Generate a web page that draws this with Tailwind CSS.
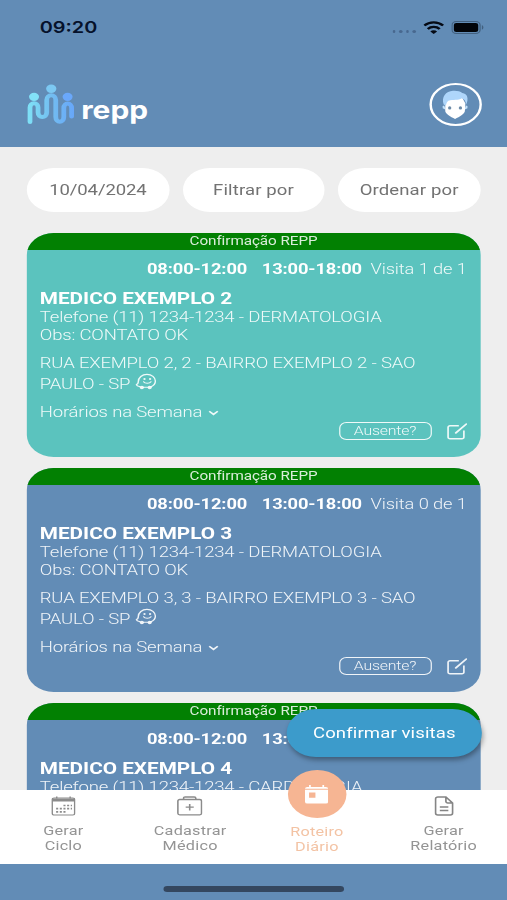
<!DOCTYPE html>
<html lang="pt-BR">
<head>
    <meta charset="UTF-8">
    <meta name="viewport" content="width=device-width, initial-scale=1.0">
    <title>Roteiro Diário</title>
    <!-- Tailwind CSS -->
    <script src="https://cdn.jsdelivr.net/npm/@tailwindcss/browser@4"></script>
    <style>
        body { font-family: Roboto, 'Liberation Sans', sans-serif; }
    </style>
</head>
<body class="w-[507px] h-[900px] overflow-hidden bg-[#eeeeee]">

    <!-- Ícones compartilhados pelos cartões -->
    <svg class="hidden">
        <symbol id="icon-waze" viewBox="0 0 16 16">
            <path d="M3.600 13C2 12.500.9 11.800.6 10.900c1.500-.2 1.600-1 1.600-2.600C2.200 4.200 5.200 1.300 8.900 1.300c3.700 0 6.500 2.800 6.500 6.300 0 2.300-1.300 4.300-3.300 5.400M6.300 13.400h3.300" fill="none" stroke="currentColor" stroke-width="1.100" stroke-linecap="round"/>
            <circle cx="5" cy="13.700" r="1.600" fill="currentColor"/>
            <circle cx="11" cy="13.700" r="1.600" fill="currentColor"/>
            <circle cx="7" cy="5.700" r=".9" fill="currentColor"/>
            <circle cx="11.300" cy="5.700" r=".9" fill="currentColor"/>
            <path d="M6.300 8.200c1 1.900 4.700 1.900 5.700 0" fill="none" stroke="currentColor" stroke-width="1" stroke-linecap="round"/>
        </symbol>
        <symbol id="icon-edit" viewBox="0 0 16 16">
            <path d="M9.500 2.600H2.700A1.500 1.500 0 0 0 1.200 4.100v9.200a1.500 1.500 0 0 0 1.500 1.500h9.200a1.500 1.500 0 0 0 1.500-1.500V7" fill="none" stroke="currentColor" stroke-width="1.300"/>
            <path d="M7.200 9.300 15.300 1" fill="none" stroke="currentColor" stroke-width="1.500" stroke-linecap="round"/>
        </symbol>
    </svg>

    <div class="relative flex flex-col w-[415.600px] h-[900px] origin-top-left scale-x-[1.22] overflow-hidden">

        <!-- Cabeçalho -->
        <header class="shrink-0 h-[147px] bg-[#628cb6]">
            <div class="flex items-center justify-between h-[54px] pl-[32.500px] pr-[18.700px]">
                <span class="pt-[1px] font-[Inter] font-semibold text-[16.300px] text-[#06122b]">09:20</span>
                <div class="flex items-center">
                    <div class="flex gap-[3px] mt-[9px] mr-[6px]">
                        <i class="size-[2.500px] rounded-full bg-[#48688f]"></i>
                        <i class="size-[2.500px] rounded-full bg-[#48688f]"></i>
                        <i class="size-[2.500px] rounded-full bg-[#48688f]"></i>
                        <i class="size-[2.500px] rounded-full bg-[#48688f]"></i>
                    </div>
                    <svg class="w-[17px] h-[13px] mr-[6px]" viewBox="0 0 17 13" fill="none" stroke="#050a14" stroke-width="2.200">
                        <path d="M.8 4.600a10.800 10.800 0 0 1 15.400 0M3.600 8a6.900 6.900 0 0 1 9.800 0"/>
                        <path d="M8.500 13 5.700 10.500a3.900 3.900 0 0 1 5.600 0Z" fill="#050a14" stroke="none"/>
                    </svg>
                    <svg class="w-[27px] h-[13px]" viewBox="0 0 27 13">
                        <rect x=".5" y=".5" width="23" height="12" rx="3.500" fill="none" stroke="#42607f"/>
                        <rect x="2" y="2" width="20" height="9" rx="2" fill="#02050a"/>
                        <path d="M25 4.300c1.600.6 1.600 3.800 0 4.400Z" fill="#42607f"/>
                    </svg>
                </div>
            </div>
            <div class="flex items-center justify-between pl-[22px] pr-[21px] pt-[29px]">
                <div class="flex items-center">
                    <svg class="w-[40px] h-[42px]" viewBox="0 0 40 42" fill="none">
                        <defs>
                            <linearGradient id="logo" x1="0" y1="0" x2="40" y2="0" gradientUnits="userSpaceOnUse">
                                <stop offset="0" stop-color="#7fe3f7"/>
                                <stop offset=".5" stop-color="#73bdf0"/>
                                <stop offset="1" stop-color="#66a5fa"/>
                            </linearGradient>
                        </defs>
                        <path d="M2.600 38V23.500C2.600 17.800 9.200 17.800 9.200 23.500V28.500C9.200 34.500 16.300 34.500 16.300 28.500V16C16.300 9.700 23.700 9.700 23.700 16V33C23.700 39.300 30.300 39.300 30.300 33V24C30.300 18 36.700 18 36.700 24V32.500" stroke="url(#logo)" stroke-width="3.900" stroke-linecap="round" stroke-linejoin="round"/>
                        <circle cx="5.900" cy="12.800" r="4.100" fill="#82e1f8"/>
                        <circle cx="20" cy="4.700" r="4.200" fill="#7cc8f2"/>
                        <circle cx="33.400" cy="12.800" r="4.100" fill="#6aa8fb"/>
                    </svg>
                    <span class="ml-[4.500px] pt-[11px] font-[Inter] font-bold text-[24.500px] leading-[30px] text-white">repp</span>
                </div>
                <div class="flex items-center justify-center size-[43px] rounded-full border-2 border-white">
                    <svg class="w-[22px] h-[29px]" viewBox="0 0 26 30" preserveAspectRatio="none">
                        <path d="M2.500 16 1 16.500v2.500l3 1.500M23.500 16l1.500.5v2.500l-3 1.500" fill="#c4e2fb"/>
                        <path d="M3.500 14 6 10l14-2 3 6-.5 8c-.5 3-5 5.500-9.500 8-4.500-2.500-9-5-9.500-8Z" fill="#fff"/>
                        <path d="M2 15C-.5 7 4 1.500 11 .8c4-.3 7 .7 9 2.200 5 .5 6.500 6 3.700 12-.4-3.500-1.500-5.500-4-6.500-4.200 2.500-8.200 1-13.200 2.500C5 12 4.700 14 4 16Z" fill="#aed6fb"/>
                        <circle cx="7.800" cy="18.500" r="1.600" fill="#6d8ba8"/>
                        <circle cx="18.200" cy="18.500" r="1.600" fill="#6d8ba8"/>
                    </svg>
                </div>
            </div>
        </header>

        <!-- Filtros -->
        <div class="shrink-0 flex gap-[11px] px-[22px] pt-[21px] text-[15.200px] tracking-[.1px] text-[#727272]">
            <button class="flex-1 h-[44px] rounded-full bg-white tracking-[-.1px]">10/04/2024</button>
            <button class="flex-1 h-[44px] rounded-full bg-white">Filtrar por</button>
            <button class="flex-1 h-[44px] rounded-full bg-white">Ordenar por</button>
        </div>

        <!-- Lista de visitas -->
        <main id="visitas" class="flex flex-col gap-[11px] px-[22px] pt-[21px] flex-1 min-h-0 overflow-hidden"></main>

        <button class="absolute left-[235px] top-[709px] w-[160px] h-[48px] rounded-full bg-[#3c9bcb] text-white text-[15.200px] tracking-[.1px] shadow-[1px_3px_5px_rgba(0,0,0,0.35)]">Confirmar visitas</button>

        <!-- Navegação inferior -->
        <nav class="relative shrink-0 grid grid-cols-4 h-[74px] bg-white text-center text-[13.300px] leading-[15.500px] tracking-[.2px] text-[#949494]">
            <a class="flex flex-col items-center pt-[6px]">
                <svg class="w-[20px] h-[20px] mb-[6.500px]" viewBox="0 0 20 20">
                    <rect x=".8" y="2" width="18.400" height="17" rx="1.500" fill="none" stroke="#8b8b8b" stroke-width="1.200"/>
                    <path d="M1 2.500h18v3H1Z" fill="#8b8b8b"/>
                    <path d="M4.500.5v2M15.500.5v2" stroke="#8b8b8b" stroke-width="1.200"/>
                    <path d="M10 9.500h7M4 12.700h13M4 15.900h9" stroke="#8b8b8b" stroke-width="1.700" stroke-dasharray="1.700 1.300"/>
                </svg>
                <span>Gerar<br>Ciclo</span>
            </a>
            <a class="flex flex-col items-center pt-[6px]">
                <svg class="w-[21px] h-[20px] mb-[6.500px]" viewBox="0 0 21 20" fill="none" stroke="#8b8b8b" stroke-width="1.300">
                    <rect x=".8" y="3.500" width="19.400" height="15.300" rx="1.500"/>
                    <path d="M5.500 3.500V2.200c0-.8.4-1.200 1.200-1.200h7.600c.8 0 1.200.4 1.200 1.200v1.300M10.500 8v6.500M7.200 11.200h6.600"/>
                </svg>
                <span>Cadastrar<br>Médico</span>
            </a>
            <a class="relative flex flex-col items-center pt-[33.500px] text-[#f3c3a4]">
                <span class="absolute -top-[20px] flex items-center justify-center size-[48px] rounded-full bg-[#f6b593]">
                    <svg class="w-[19px] h-[19px]" viewBox="0 0 20 20">
                        <path d="M2 2h1.500V0H5v2h10V0h1.500v2H18a2 2 0 0 1 2 2H0a2 2 0 0 1 2-2Z" fill="#fff"/>
                        <path fill-rule="evenodd" d="M0 5h20v12.500a2 2 0 0 1-2 2H2a2 2 0 0 1-2-2ZM3.500 8v5.500H9V8Z" fill="#fff"/>
                    </svg>
                </span>
                <span>Roteiro<br>Diário</span>
            </a>
            <a class="flex flex-col items-center pt-[6px]">
                <svg class="w-[16px] h-[20px] mb-[6.500px]" viewBox="0 0 16 20" fill="none" stroke="#858585" stroke-width="1.400">
                    <path d="M9.500 1H3a2 2 0 0 0-2 2v14a2 2 0 0 0 2 2h10a2 2 0 0 0 2-2V7Z M9.500 1v4.500A1.500 1.500 0 0 0 11 7h4M4.500 11h7M4.500 14.500h7"/>
                </svg>
                <span>Gerar<br>Relatório</span>
            </a>
        </nav>

        <footer class="shrink-0 h-[36px] pt-[22px] bg-[#628cb6]">
            <div class="mx-auto w-[147.500px] h-[5.500px] rounded-full bg-[#34475f]"></div>
        </footer>
    </div>

    <script>
        const visitas = [
            { n: 2, visita: '1 de 1', esp: 'DERMATOLOGIA', cor: 'bg-[#5bc3be]' },
            { n: 3, visita: '0 de 1', esp: 'DERMATOLOGIA', cor: 'bg-[#628cb6]' },
            { n: 4, visita: '0 de 1', esp: 'CARDIOLOGIA', cor: 'bg-[#628cb6]' },
        ];

        document.getElementById('visitas').innerHTML = visitas.map(v => `
            <article class="shrink-0 flex flex-col h-[224px] rounded-[22px] overflow-hidden text-white ${v.cor}">
                <div class="h-[17px] bg-[#028002] text-center text-[12.500px] leading-[15px] tracking-[-.05px] text-white/85">Confirmação REPP</div>
                <div class="flex flex-col pl-[10.600px] pr-[11px] text-[15.200px] tracking-[-.15px] font-light text-white/90">
                    <div class="flex justify-end h-[18px] mt-[10px] text-[15px] leading-[18px] tracking-[-.1px]">
                        <b class="font-bold text-white mr-[12px]">08:00-12:00</b>
                        <b class="font-bold text-white mr-[7px]">13:00-18:00</b>
                        <span>Visita ${v.visita}</span>
                    </div>
                    <h2 class="mt-[10px] h-[20px] leading-[20px] text-[17px] tracking-normal font-bold text-white">MEDICO EXEMPLO ${v.n}</h2>
                    <p class="leading-[18px]">Telefone (11) 1234-1234 - ${v.esp}</p>
                    <p class="leading-[18px]">Obs: CONTATO OK</p>
                    <p class="mt-[9px] leading-[20.500px]">RUA EXEMPLO ${v.n}, ${v.n} - BAIRRO EXEMPLO ${v.n} - SAO<br>PAULO - SP <svg class="inline w-[17px] h-[17px] -mt-[5px] ml-[1px]"><use href="#icon-waze"/></svg></p>
                    <p class="mt-[8px] leading-[20px]">Horários na Semana <svg class="inline w-[10px] h-[8px] ml-[1px]" viewBox="0 0 10 8" fill="none" stroke="currentColor" stroke-width="1.500"><path d="M1.500 2.200l3.500 3.200L8.500 2.200"/></svg></p>
                    <div class="flex items-center justify-end gap-[12px]">
                        <button class="w-[76px] h-[18px] rounded-[6px] border border-white/90 text-[13px] leading-[16px]">Ausente?</button>
                        <svg class="w-[17px] h-[17px]"><use href="#icon-edit"/></svg>
                    </div>
                </div>
            </article>`).join('');
    </script>
</body>
</html>
